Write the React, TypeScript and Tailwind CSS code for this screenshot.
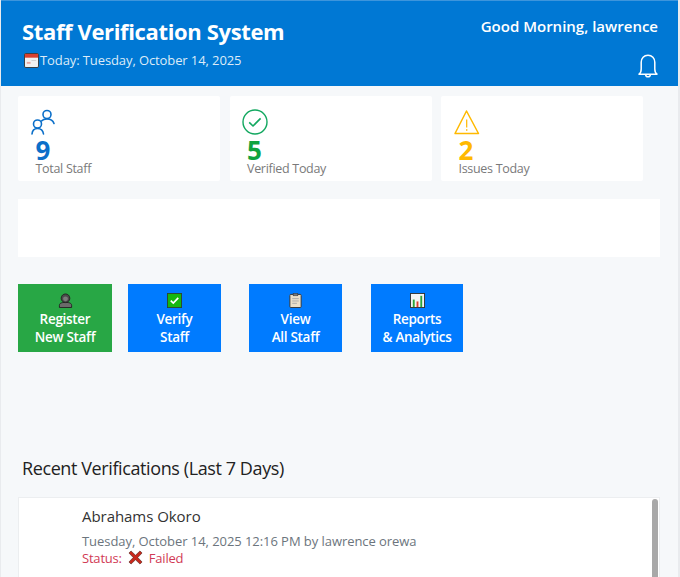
import type { ReactNode } from "react";

const FONT = "font-['Open_Sans','Noto_Sans',sans-serif]";

function PeopleIcon() {
  return (
    <svg viewBox="0 0 24 26" className="h-[26px] w-[24px] text-[#0b6fc9]" fill="none" stroke="currentColor" strokeWidth="1.6" strokeLinecap="round">
      <circle cx="16" cy="5.5" r="4" />
      <path d="M10.5 12C11.5 10.8 13.5 10 16 10C19.5 10 22 11.5 23 14.5" />
      <circle cx="6.5" cy="15" r="4" />
      <path d="M1 25C1.3 21.5 3.3 19.5 6.5 19.5C9.7 19.5 12 21.5 12.5 25" />
    </svg>
  );
}

function CheckCircleIcon() {
  return (
    <svg viewBox="0 0 26 26" className="h-[26px] w-[26px]" fill="none" stroke="#13a860" strokeWidth="1.4">
      <circle cx="13" cy="13" r="12" />
      <path d="M7.2 13.4L11 17L18.6 9.4" strokeWidth="1.6" />
    </svg>
  );
}

function WarningIcon() {
  return (
    <svg viewBox="0 0 26 26" className="h-[26px] w-[26px]" fill="none" stroke="#ffb900" strokeWidth="1.5">
      <path d="M12.5 2L1 24.5H24.5Z" strokeLinejoin="round" />
      <path d="M12.7 10.5V18.5" strokeWidth="1.2" />
      <path d="M12.7 20.2V21.8" strokeWidth="1.4" />
    </svg>
  );
}

function BellIcon() {
  return (
    <svg viewBox="0 0 20 24" className="h-[24px] w-[20px]" fill="none" stroke="#fff" strokeWidth="1.5">
      <path d="M1 20.2C2.6 19.2 3.2 17.6 3.2 15V8.2C3.2 4.2 6 1.2 10 1.2C14 1.2 16.8 4.2 16.8 8.2V15C16.8 17.6 17.4 19.2 19 20.2Z" strokeLinejoin="round" />
      <path d="M7.6 20.6C7.8 22 8.8 22.8 10 22.8C11.2 22.8 12.2 22 12.4 20.6" />
    </svg>
  );
}

function CalendarEmoji() {
  return (
    <svg viewBox="0 0 16 16" className="ml-[2px] mr-[1px] h-[15px] w-[15px] shrink-0">
      <rect x="0.5" y="0.5" width="15" height="15" rx="1.5" fill="#f1f1f1" stroke="#333" />
      <rect x="1" y="1" width="14" height="4" fill="#d8402f" />
      <rect x="3" y="9.5" width="4" height="2" fill="#e7a6a0" />
      <rect x="8" y="7.5" width="5" height="1" fill="#cfcfcf" />
    </svg>
  );
}

function PersonEmoji() {
  return (
    <svg viewBox="0 0 16 16" className="h-[15px] w-[15px]">
      <path d="M1.5 15.5v-2.4c0-2 2-3.1 6.5-3.1s6.5 1.1 6.5 3.1v2.4z" fill="#6a6a6a" stroke="#222" />
      <circle cx="8" cy="5.6" r="4.6" fill="#4a4a4a" stroke="#222" />
      <circle cx="8" cy="6.2" r="2.6" fill="#7b7b7b" />
    </svg>
  );
}

function CheckEmoji() {
  return (
    <svg viewBox="0 0 16 16" className="h-[15px] w-[15px]">
      <rect x="0.5" y="0.5" width="15" height="15" fill="#16b80f" stroke="#2d4a2b" />
      <path d="M4 8.2l2.7 2.6L12 5.2" fill="none" stroke="#fff" strokeWidth="1.8" />
    </svg>
  );
}

function ClipboardEmoji() {
  return (
    <svg viewBox="0 0 16 16" className="h-[15px] w-[15px]">
      <rect x="2" y="1.5" width="12" height="14" rx="1" fill="#e9dfc9" stroke="#333" />
      <rect x="5.5" y="0.5" width="5" height="2.5" fill="#777" stroke="#333" strokeWidth="0.5" />
      <path d="M4.5 6h7M4.5 8.5h7M4.5 11h5" stroke="#aaa" strokeWidth="1" />
    </svg>
  );
}

function ChartEmoji() {
  return (
    <svg viewBox="0 0 16 16" className="h-[15px] w-[15px]">
      <rect x="0.5" y="0.5" width="15" height="15" fill="#f4f4f4" stroke="#333" />
      <rect x="3" y="7" width="2" height="8" fill="#2aa63a" />
      <rect x="7" y="9" width="2" height="6" fill="#d8402f" />
      <rect x="11" y="3" width="2" height="12" fill="#2aa63a" />
    </svg>
  );
}

function CrossEmoji() {
  return (
    <svg viewBox="0 0 16 16" className="h-[15px] w-[15px] shrink-0">
      <path d="M1 3.2L3.2 1 8 5.6 12.8 1 15 3.2 10.4 8 15 12.8 12.8 15 8 10.4 3.2 15 1 12.8 5.6 8z" fill="#c8281c" stroke="#5a2a22" strokeWidth="0.7" />
    </svg>
  );
}

interface StatCardProps {
  icon: ReactNode;
  value: number;
  label: string;
  color: string;
}

function StatCard({ icon, value, label, color }: StatCardProps) {
  return (
    <div className="flex h-[85px] w-[202px] flex-col rounded-[2px] bg-white pl-[12.5px] pt-[13px]">
      <div className="flex h-[26px] items-center">{icon}</div>
      <div className={`ml-[5px] mt-[5px] h-[20px] text-[26px] leading-[20px] font-bold ${color}`}>{value}</div>
      <div className="ml-[5px] mt-[2px] text-[12.5px] leading-[14px] tracking-[-0.3px] text-[#7a7a7a]">{label}</div>
    </div>
  );
}

interface ActionButtonProps {
  icon: ReactNode;
  line1: string;
  line2: string;
  color: string;
  width: string;
}

function ActionButton({ icon, line1, line2, color, width }: ActionButtonProps) {
  return (
    <div className={`flex h-[68px] flex-col items-center justify-center pt-[2px] text-[13.5px] leading-[18px] font-semibold tracking-[-0.3px] text-white ${color} ${width}`}>
      {icon}
      <span className="mt-[2px]">{line1}</span>
      <span>{line2}</span>
    </div>
  );
}

export default function App() {
  return (
    <div className={`h-[577px] w-[680px] overflow-hidden bg-[#e9ebee] pl-px pr-[2px] ${FONT}`}>
      <div className="h-full bg-[#f6f8fa]">
        <header className="flex h-[86px] items-start justify-between border-t border-[#3d95dc] bg-[#0078d4] pl-[21px] pr-[20px] text-white">
          <div>
            <h1 className="mt-[15px] text-[22px] leading-[30px] font-bold tracking-[-0.36px]">Staff Verification System</h1>
            <div className="mt-[4px] flex items-center text-[13px] leading-[20px] tracking-[-0.1px] text-[#dcebf8]">
              <CalendarEmoji />
              <span>Today: Tuesday, October 14, 2025</span>
            </div>
          </div>
          <div className="flex flex-col items-end">
            <div className="mt-[14px] text-[15px] leading-[22px] font-semibold">Good Morning, lawrence</div>
            <div className="mt-[17px]">
              <BellIcon />
            </div>
          </div>
        </header>

        <main className="pl-[17px] pr-[18px]">
          <section className="mt-[10px] flex gap-[9.5px]">
            <StatCard icon={<PeopleIcon />} value={9} label="Total Staff" color="text-[#0b6fc9]" />
            <StatCard icon={<CheckCircleIcon />} value={5} label="Verified Today" color="text-[#0ea33f]" />
            <StatCard icon={<WarningIcon />} value={2} label="Issues Today" color="text-[#ffb900]" />
          </section>

          <section className="mt-[18px] h-[58px] bg-white" />

          <section className="mt-[27px] flex">
            <ActionButton icon={<PersonEmoji />} line1="Register" line2="New Staff" color="bg-[#28a745]" width="w-[94px]" />
            <div className="ml-[16px]">
              <ActionButton icon={<CheckEmoji />} line1="Verify" line2="Staff" color="bg-[#007bff]" width="w-[93px]" />
            </div>
            <div className="ml-[28px]">
              <ActionButton icon={<ClipboardEmoji />} line1="View" line2="All Staff" color="bg-[#007bff]" width="w-[93px]" />
            </div>
            <div className="ml-[29px]">
              <ActionButton icon={<ChartEmoji />} line1="Reports" line2="& Analytics" color="bg-[#007bff]" width="w-[92px]" />
            </div>
          </section>

          <h2 className="ml-[4px] mt-[103px] text-[18px] leading-[26px] tracking-[-0.4px] text-[#222]">Recent Verifications (Last 7 Days)</h2>

          <section className="relative mt-[16px] h-[120px] border border-[#eceef0] bg-white pl-[63px] pt-[8px]">
            <div className="text-[15px] leading-[20px] tracking-[-0.05px] text-[#333]">Abrahams Okoro</div>
            <div className="mt-[6px] text-[13px] leading-[18px] tracking-[-0.06px] text-[#6c757d]">Tuesday, October 14, 2025 12:16 PM by lawrence orewa</div>
            <div className="flex items-center gap-[6px] text-[13px] leading-[14px] tracking-[-0.2px] text-[#d13a55]">
              <span>Status:</span>
              <CrossEmoji />
              <span>Failed</span>
            </div>
            <div className="absolute right-[1px] top-[1px] h-[118px] w-[6px] rounded-t-[3px] bg-[#a8a8a8]" />
          </section>
        </main>
      </div>
    </div>
  );
}
